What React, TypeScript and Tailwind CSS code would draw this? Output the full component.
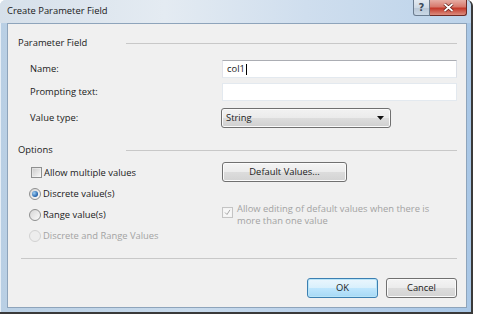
import React from "react";

const Checkbox = ({ checked = false, disabled = false }: { checked?: boolean; disabled?: boolean }) => (
  <div
    className={`w-[11px] h-[11px] border flex items-center justify-center shrink-0 ${
      disabled ? "border-[#c4c4c4] bg-[#f4f4f4]" : "border-[#8e8f8f] bg-gradient-to-br from-[#dcdcdc] to-[#fafafa]"
    }`}
  >
    <div className={`w-[7px] h-[7px] ${disabled ? "bg-[#f7f7f7]" : "bg-gradient-to-br from-[#cfcfcf] to-[#f4f4f4]"}`}>
      {checked && (
        <svg width="7" height="7" viewBox="0 0 7 7">
          <path d="M1 3.5 L3 5.5 L6 0.8" fill="none" stroke={disabled ? "#a8a8a8" : "#4a4a4a"} strokeWidth="1" />
        </svg>
      )}
    </div>
  </div>
);

const Radio = ({ checked = false, disabled = false }: { checked?: boolean; disabled?: boolean }) => (
  <div
    className={`w-[12px] h-[12px] rounded-full border flex items-center justify-center shrink-0 ${
      disabled ? "border-[#d2d2d2] bg-[#ededed]" : "border-[#8e8f8f] bg-gradient-to-br from-[#d6d6d6] to-[#fbfbfb]"
    }`}
  >
    {checked && <div className="w-[6px] h-[6px] rounded-full bg-[radial-gradient(circle_at_35%_35%,#9fd0f5,#1f5fa8_70%)]" />}
  </div>
);

const Button = ({ children, isDefault = false, className = "" }: { children: React.ReactNode; isDefault?: boolean; className?: string }) => (
  <div
    className={`h-[20px] rounded-[3px] border flex items-center justify-center ${
      isDefault
        ? "border-[#3c7fb1] shadow-[inset_0_0_0_1px_#b8e4f8] bg-[linear-gradient(#eaf6fd_0%,#d9f0fc_48%,#bee6fd_52%,#a7d9f5_100%)]"
        : "border-[#707070] shadow-[inset_0_0_0_1px_#fbfbfb] bg-[linear-gradient(#f4f4f4_0%,#ececec_48%,#dcdcdc_52%,#d3d3d3_100%)]"
    } text-[#1b1b1b] ${className}`}
  >
    {children}
  </div>
);

const SectionHeader = ({ title }: { title: string }) => (
  <div className="h-[14px] flex items-center">
    <span className="text-[#1b1b1b] w-[108px] shrink-0">{title}</span>
    <div className="flex-1 h-px bg-[#c8c8c8]" />
  </div>
);

export default function App() {
  return (
    <div
      className="w-[479px] h-[321px] bg-white overflow-hidden text-[9.4px] leading-[12px]"
      style={{ fontFamily: '"Open Sans", "Noto Sans", sans-serif' }}
    >
      <div className="w-[473px] h-[314px] flex flex-col rounded-t-[6px] border-r-[2px] border-b-[2px] border-[#3a3a3a] bg-[linear-gradient(90deg,#b9cfe4_0%,#c9dbec_40%,#b8d0ea_70%,#a9c7e6_100%)] shadow-[inset_1px_1px_0_#e6eef6]">
        {/* title bar */}
        <div className="h-[23px] flex items-start shrink-0 bg-[linear-gradient(90deg,#d6e0ea_0%,#e4ebf2_35%,#cfdeee_65%,#bcd3ea_100%)] rounded-t-[6px]">
          <span className="pl-[7px] pt-[5px] text-[#1a1a1a]">Create Parameter Field</span>
          <div className="flex-1" />
          <div className="flex mr-[4px]">
            <div className="w-[17px] h-[16px] rounded-bl-[3px] border border-t-0 border-[#6b7c8f] bg-[linear-gradient(#e3eaf1_0%,#cfdae5_50%,#b9c7d6_51%,#cad8e6_100%)] flex items-center justify-center">
              <span className="text-[#3c4a5a] text-[10px] leading-[10px] font-bold" style={{ fontFamily: '"DejaVu Sans", sans-serif' }}>?</span>
            </div>
            <div className="w-[37px] h-[16px] rounded-br-[3px] border border-t-0 border-l-0 border-[#6e2a24] bg-[linear-gradient(#e6ada4_0%,#d77a6d_45%,#c4392a_55%,#db8d7f_100%)] flex items-center justify-center">
              <svg width="11" height="9" viewBox="0 0 11 9">
                <path d="M1.5 1 L9.5 8 M9.5 1 L1.5 8" stroke="#5a1a14" strokeWidth="3.2" />
                <path d="M1.5 1 L9.5 8 M9.5 1 L1.5 8" stroke="#ffffff" strokeWidth="1.7" />
              </svg>
            </div>
          </div>
        </div>
        {/* client */}
        <div className="ml-[7px] mr-[4px] mb-[4px] flex-1 bg-[#f0f0f0] border border-[#8ea4bb] flex flex-col pl-[10px] pr-[9px] text-[#1b1b1b]">
          <div className="mt-[12px]">
            <SectionHeader title="Parameter Field" />
          </div>
          <div className="mt-[10px] h-[18px] flex items-center pl-[12px]">
            <span className="w-[192px] shrink-0">Name:</span>
            <div className="flex-1 h-[18px] bg-white border border-[#abadb3] border-l-[#e2e3ea] border-r-[#dbdfe6] border-b-[#e3e9ef] flex items-center pl-[4px]">
              <span>col1</span>
              <span className="w-px h-[11px] bg-black ml-px" />
            </div>
          </div>
          <div className="mt-[5px] h-[18px] flex items-center pl-[12px]">
            <span className="w-[192px] shrink-0">Prompting text:</span>
            <div className="flex-1 h-[18px] bg-white border border-[#e3e9ef]" />
          </div>
          <div className="mt-[7px] h-[20px] flex items-center pl-[12px]">
            <span className="w-[191px] shrink-0">Value type:</span>
            <div className="w-[170px] h-[20px] rounded-[3px] border border-[#707070] bg-[linear-gradient(#f2f2f2_0%,#ebebeb_48%,#dddddd_52%,#cfcfcf_100%)] shadow-[inset_0_0_0_1px_#fafafa] flex items-center pl-[4px] pr-[6px]">
              <span className="flex-1">String</span>
              <svg width="7" height="4" viewBox="0 0 7 4">
                <path d="M0 0 H7 L3.5 4 Z" fill="#111" />
              </svg>
            </div>
          </div>
          <div className="mt-[15px]">
            <SectionHeader title="Options" />
          </div>
          <div className="mt-[5px] flex">
            <div className="w-[204px] shrink-0 flex flex-col pl-[11px]">
              <div className="h-[21px] flex items-center gap-[1px] pl-[2px]">
                <Checkbox />
                <span className="pl-[1px]">Allow multiple values</span>
              </div>
              <div className="h-[21px] flex items-center gap-[2px]">
                <Radio checked />
                <span>Discrete value(s)</span>
              </div>
              <div className="h-[21px] flex items-center gap-[2px]">
                <Radio />
                <span>Range value(s)</span>
              </div>
              <div className="h-[21px] flex items-center gap-[2px]">
                <Radio disabled />
                <span className="text-[#a3a3a3]">Discrete and Range Values</span>
              </div>
            </div>
            <div className="flex flex-col">
              <Button className="w-[125px]">Default Values...</Button>
              <div className="mt-[21px] flex items-start gap-[4px]">
                <div className="mt-[4px]">
                  <Checkbox checked disabled />
                </div>
                <span className="text-[#a3a3a3] w-[220px]">
                  Allow editing of default values when there is
                  <br />
                  more than one value
                </span>
              </div>
            </div>
          </div>
          <div className="mt-[12px] ml-[3px] h-px bg-[#c8c8c8]" />
          <div className="mt-[19px] flex justify-end gap-[8px]">
            <Button isDefault className="w-[71px]">OK</Button>
            <Button className="w-[71px]">Cancel</Button>
          </div>
        </div>
      </div>
    </div>
  );
}
